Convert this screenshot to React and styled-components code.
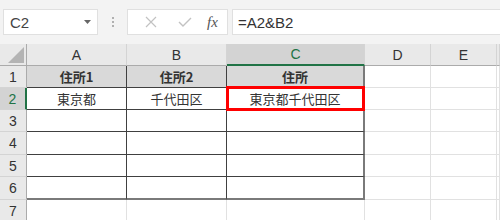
import styled, { createGlobalStyle } from 'styled-components';

const GlobalStyle = createGlobalStyle`
    html, body {
        margin: 0;
        padding: 0;
        background: #ffffff;
        overflow: hidden;
    }
    body {
        font-family: "Noto Sans CJK JP", "Noto Sans", sans-serif;
    }
`

const Page = styled.div`
    width: 500px;
    height: 220px;
    overflow: hidden;
    background: #ffffff;
`

const Toolbar = styled.div`
    height: 44px;
    background: #f3f3f3;
    display: flex;
    align-items: center;
    padding-left: 3px;
    box-sizing: border-box;
`

const Box = styled.div`
    height: 26px;
    background: #ffffff;
    border: 1px solid #e0e0e0;
    box-sizing: border-box;
    display: flex;
    align-items: center;
`

const NameBox = styled(Box)`
    width: 95px;
    padding: 0 6px 0 6px;
    justify-content: space-between;
    font-family: "Liberation Sans", "Noto Sans", sans-serif;
    font-size: 15px;
    color: #444444;
`

const Dots = styled.div`
    width: 29px;
    display: flex;
    flex-direction: column;
    align-items: center;
    gap: 2px;
    span {
        width: 2px;
        height: 2px;
        background: #b0b0b0;
    }
`

const FxBox = styled(Box)`
    width: 101px;
    display: grid;
    grid-template-columns: 34px 34px 1fr;
    justify-items: center;
    padding: 0 4px 0 6px;
`

const FxText = styled.span`
    font-family: "Liberation Serif", serif;
    font-style: italic;
    font-size: 15px;
    color: #555555;
`

const FormulaBox = styled(Box)`
    flex: 1;
    margin-left: 4px;
    border-right: none;
    padding-left: 5px;
    font-family: "Liberation Sans", "Noto Sans", sans-serif;
    font-size: 15px;
    color: #333333;
`

const Grid = styled.div`
    display: grid;
    grid-template-columns: 27px 100px 100px 138px 66px 66px 3px;
    grid-template-rows: 22px 22px 22px 22px 23px 22px 23px 22px;
`

const Corner = styled.div`
    background: #e9e9e9;
    border-right: 1px solid #ababab;
    border-bottom: 1px solid #ababab;
    box-sizing: border-box;
    display: flex;
    align-items: flex-end;
    justify-content: flex-end;
    padding: 0 2px 2px 0;
`

const ColHead = styled.div`
    background: ${ p => p.$sel ? '#d3d3d3' : '#e9e9e9' };
    color: ${ p => p.$sel ? '#217346' : '#333333' };
    border-right: 1px solid #d4d4d4;
    border-bottom: ${ p => p.$sel ? '2px solid #217346' : '1px solid #ababab' };
    box-sizing: border-box;
    display: flex;
    align-items: center;
    justify-content: center;
    font-family: "Liberation Sans", "Noto Sans", sans-serif;
    font-size: 14px;
`

const RowHead = styled.div`
    background: ${ p => p.$sel ? '#d3d3d3' : '#e9e9e9' };
    color: ${ p => p.$sel ? '#217346' : '#333333' };
    border-bottom: 1px solid #d4d4d4;
    border-right: ${ p => p.$sel ? '2px solid #217346' : '1px solid #ababab' };
    box-sizing: border-box;
    display: flex;
    align-items: center;
    justify-content: center;
    font-family: "Liberation Sans", "Noto Sans", sans-serif;
    font-size: 14px;
`

const Cell = styled.div`
    position: relative;
    background: ${ p => p.$head ? '#d9d9d9' : '#ffffff' };
    border-right: ${ p => p.$edgeR ? '2px solid #7a7a7a' : `1px solid ${ p.$tbl ? '#404040' : '#e1e1e1' }` };
    border-bottom: ${ p => p.$edgeB ? '2px solid #7a7a7a' : `1px solid ${ p.$tbl ? '#404040' : '#e1e1e1' }` };
    box-sizing: border-box;
    display: flex;
    align-items: center;
    justify-content: center;
    font-size: 13px;
    font-weight: ${ p => p.$head ? 700 : 400 };
    color: #333333;
    white-space: nowrap;
`

const Active = styled.div`
    position: absolute;
    left: -1px;
    top: -2px;
    right: -2px;
    bottom: -2px;
    border: 3px solid #ff0000;
    z-index: 2;
    pointer-events: none;
`

const cols = ['A', 'B', 'C', 'D', 'E', '']
const data = {
    1: ['住所1', '住所2', '住所'],
    2: ['東京都', '千代田区', '東京都千代田区'],
}

const App = () => {
    const rows = [1, 2, 3, 4, 5, 6, 7]
    return(
        <Page>
            <GlobalStyle />
            <Toolbar>
                <NameBox>
                    <span>C2</span>
                    <svg width="7" height="4" viewBox="0 0 7 4"><polygon points="0,0 7,0 3.5,4" fill="#666" /></svg>
                </NameBox>
                <Dots><span /><span /><span /></Dots>
                <FxBox>
                    <svg width="12" height="12" viewBox="0 0 12 12">
                        <path d="M1 1 L11 11 M11 1 L1 11" stroke="#c2c2c2" strokeWidth="1.2" fill="none" />
                    </svg>
                    <svg width="14" height="12" viewBox="0 0 14 12">
                        <path d="M1 6 L5 10 L13 2" stroke="#c2c2c2" strokeWidth="1.4" fill="none" />
                    </svg>
                    <FxText>fx</FxText>
                </FxBox>
                <FormulaBox>=A2&amp;B2</FormulaBox>
            </Toolbar>
            <Grid>
                <Corner>
                    <svg width="16" height="16" viewBox="0 0 16 16"><polygon points="16,0 16,16 0,16" fill="#b4b4b4" /></svg>
                </Corner>
                { cols.map((c, i) => <ColHead key={ i } $sel={ c === 'C' }>{ c }</ColHead>) }
                { rows.map(r => [
                    <RowHead key={ 'h' + r } $sel={ r === 2 }>{ r }</RowHead>,
                    ...cols.map((c, i) => {
                        const tbl = i < 3 && r <= 6
                        const text = data[r] ? data[r][i] : null
                        return (
                            <Cell
                                key={ r + c + i }
                                $tbl={ tbl }
                                $head={ r === 1 && i < 3 }
                                $edgeR={ tbl && i === 2 }
                                $edgeB={ tbl && r === 6 }
                            >
                                { text }
                                { r === 2 && c === 'C' && <Active /> }
                            </Cell>
                        )
                    })
                ]) }
            </Grid>
        </Page>
    )
}

export default App
